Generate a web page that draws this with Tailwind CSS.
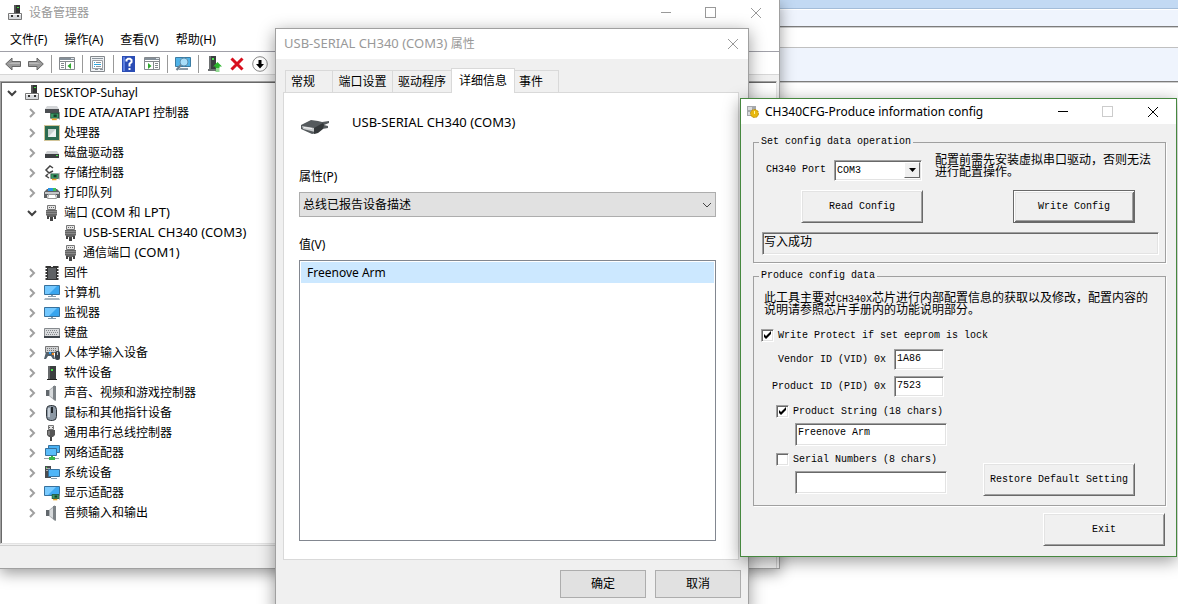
<!DOCTYPE html>
<html lang="zh-CN">
<head>
<meta charset="utf-8">
<title>设备管理器</title>
<script src="https://cdn.jsdelivr.net/npm/@tailwindcss/browser@4"></script>
</head>
<body class="relative h-screen overflow-hidden bg-white font-['Noto_Sans','Noto_Sans_CJK_SC',sans-serif] text-xs text-black">

<!-- Icon library -->
<svg class="hidden" aria-hidden="true">
  <symbol id="pc" viewBox="0 0 16 16"><path fill="#333" d="M7 0h6v9H7z"/><path fill="#555" d="M7 0h2v9H7z"/><path fill="#4d4" d="M10 2h2v1h-2z"/><path fill="#d8dadd" stroke="#777" d="M1.500 8.500h13v6h-13z"/><path fill="#333" d="M4 10h2v2H4zM10 10h2v2h-2z"/><path fill="#fff" d="M2 9h12v1H2z"/></symbol>
  <symbol id="card" viewBox="0 0 16 16"><path fill="#1d4c36" d="M4 6h11v7H4z"/><path fill="#3c9b66" d="M5 7h9v5H5z"/><path fill="#173d2c" d="M8 8h4v3H8z"/><path fill="#e9a11d" d="M6 13h6v2H6z"/><path fill="#888" d="M15 5h1v9h-1z"/></symbol>
  <symbol id="ide" viewBox="0 0 16 16"><path fill="#d4d6d8" d="M3 1h10l2 3H1z"/><path fill="#4c4f52" d="M1 4h14v4H1z"/><use href="#card" x="3" y="3" width="13" height="13"/></symbol>
  <symbol id="cpu" viewBox="0 0 16 16"><path fill="none" stroke="#a48b32" stroke-dasharray="1 1" d="M.5.500h15v15H.5z"/><path fill="#2c6b4f" d="M1 1h14v14H1z"/><path fill="#c9d2d0" d="M4 4h8v8H4z"/><path fill="#eef1f0" d="M4 12 12 4v8z"/></symbol>
  <symbol id="disk" viewBox="0 0 16 16"><path fill="#d0d2d4" d="M3 6h10l2 3H1z"/><path fill="#3c3f42" d="M1 9h14v4H1z"/><path fill="#50e050" d="M12 10h2v1h-2z"/></symbol>
  <symbol id="store" viewBox="0 0 16 16"><path fill="none" stroke="#444" stroke-width="1.500" d="M9 3 6 1 2 5l3 3 4-2M4 9l-2 2 3 2"/><use href="#card" x="3" y="4" width="13" height="12"/></symbol>
  <symbol id="printer" viewBox="0 0 16 16"><path fill="#5d6063" d="M3 4h10l3 3v6h-3v-3H3v3H0V7z"/><path fill="#2793e6" d="M4 3h8v3H4z"/><path fill="#3fc05a" d="M9 3h3v3H9z"/><path fill="#c4c6c8" d="M1 7h14v2H1z"/><path fill="#fff" stroke="#999" d="M4.500 9.500h7l1 4h-9z"/></symbol>
  <symbol id="port" viewBox="0 0 16 16"><path fill="#e4e4e4" stroke="#777" d="M3.500.500h8v4h-8z"/><path fill="#666" d="M5 2h1v1H5zM7 2h1v1H7zM9 2h1v1H9zM2 5h11v5l-2 2H4l-2-2z"/><path fill="#888" d="M2 6h11v1H2zM2 8h11v1H2z"/><path fill="#444" d="M3 11h2v3H3zM10 11h2v3h-2zM6 12h3v4H6z"/></symbol>
  <symbol id="chip" viewBox="0 0 16 16"><path fill="none" stroke="#333" stroke-width="3" stroke-dasharray="2 1" d="M3 1v14M13 1v14"/><path fill="#333" d="M3 1h10v14H3z"/><path fill="#5e6164" d="M4 3h8v11H4z"/><path fill="#eee" d="M7 1h2v1H7z"/></symbol>
  <symbol id="screen" viewBox="0 0 16 16"><path fill="#38a5ef" stroke="#37719d" d="M.5 2.500h15v9H.5z"/><path fill="#73c8ff" d="M1 3h12L5 11H1z"/><path fill="#8199ab" d="M7 12h2v1H7zM4 13h8v1H4z"/></symbol>
  <symbol id="computer" viewBox="0 0 16 16"><use href="#screen" y="-2" width="16" height="16"/><path fill="#a8b5bf" d="M1 13h14l1 2H0z"/></symbol>
  <symbol id="keyboard" viewBox="0 0 16 16"><path fill="#d9dbdd" stroke="#85898d" d="M.5 3.500h15v8H.5z"/><path stroke="#85898d" stroke-dasharray="1 1" d="M2 5.500h12M3 7.500h11M2 9.500h12"/><path fill="#3f454b" d="M0 11h16v2H0z"/></symbol>
  <symbol id="hid" viewBox="0 0 16 16"><path fill="#d0d2d4" stroke="#777" d="M1.500 1.500h13v6h-13z"/><path stroke="#777" stroke-dasharray="1 1" d="M3 3.500h10M3 5.500h10"/><path fill="#53606b" d="M2 7h7l2 7H9L7 11H4l-2 3H0z"/><path fill="#2f9cf0" d="M5 7h2v2H5z"/><path fill="#f08c28" d="M8 8h2v2H8z"/><rect x="11" y="6" width="5" height="9" rx="2" fill="#3b444c"/><path fill="#bcc4ca" d="M13 7h1v3h-1z"/></symbol>
  <symbol id="tower" viewBox="0 0 16 16"><path fill="#3b3e40" d="M4 1h8v14H4z"/><path fill="#66696b" d="M4 1h2v14H4z"/><path fill="#4ce24c" d="M7 4h2v2H7z"/><path fill="#222" d="M3 14h10v1H3z"/></symbol>
  <symbol id="speaker" viewBox="0 0 16 16"><path fill="#62686d" d="M2 5h4v6H2z"/><path fill="#a9aeb2" d="M5 5l6-5v16l-6-5z"/><path fill="#7d8387" d="M9 1h3v15l-3-2z"/><path fill="#d7dadc" d="M6 5l3-2v10l-3-2z"/></symbol>
  <symbol id="mouse" viewBox="0 0 16 16"><rect x="2.500" y=".5" width="10" height="15" rx="4" fill="#8c98a4" stroke="#31373d"/><path fill="#c6ced6" d="M4 3h2v9H4z"/><path fill="#22272c" d="M7 2h2v6H7z"/></symbol>
  <symbol id="usb" viewBox="0 0 16 16"><path fill="#e3e3e3" stroke="#777" d="M4.500.500h5v4h-5z"/><path fill="#555" d="M5 2h1v1H5zM8 2h1v1H8zM3 5h8v5l-2 2H5l-2-2z"/><path fill="#808080" d="M4 6h2v4H4z"/><path fill="#444" d="M6 12h2v4H6z"/></symbol>
  <symbol id="net" viewBox="0 0 16 16"><path fill="#49b2f4" stroke="#37719d" d="M4.500.500h11v7h-11z"/><path fill="#5abcfa" stroke="#37719d" d="M1.500 3.500h11v7h-11z"/><path fill="#39b54a" d="M5 12h6v3H5z"/><path fill="#9aa3aa" d="M0 13h5v1H0zM11 13h4v1h-4z"/><path fill="#39b54a" d="M7 11h2v2H7z"/></symbol>
  <symbol id="system" viewBox="0 0 16 16"><path fill="#4a4d50" d="M1 1h6v12H1z"/><path fill="#a8abad" d="M2 3h4v1H2zM2 5h4v1H2z"/><path fill="#4bdc4b" d="M2 2h1v1H2z"/><path fill="#4fb6f8" stroke="#37719d" d="M4.500 4.500h11v7h-11z"/><path fill="#8199ab" d="M7 13h6v1H7z"/></symbol>
  <symbol id="display" viewBox="0 0 16 16"><path fill="#3ea9f2" stroke="#37719d" d="M.5 1.500h15v9H.5z"/><path fill="#7acbff" d="M1 2h11l-8 8H1z"/><use href="#card" x="5" y="5" width="11" height="11"/></symbol>
  <symbol id="right" viewBox="0 0 16 16"><path fill="none" stroke="#a0a0a0" stroke-width="2" d="M6 4l4 4-4 4"/></symbol>
  <symbol id="down" viewBox="0 0 16 16"><path fill="none" stroke="#404040" stroke-width="2" d="M4 6l4 4 4-4"/></symbol>
  <symbol id="close" viewBox="0 0 12 12"><path fill="none" stroke="currentColor" d="M1 1l10 10M11 1 1 11"/></symbol>
  <symbol id="arrow" viewBox="0 0 16 16"><path fill="#999" stroke="#666" d="M.7 8 7 2v3.500h8.500v5H7V14z"/><path fill="#bbb" d="M7 6.500h8v1.500H3z"/></symbol>
  <symbol id="pane" viewBox="0 0 16 16"><path fill="#fff" stroke="#85898d" d="M.5 1.500h15v12H.5z"/><path fill="#85909a" d="M1 2h14v2H1z"/><path fill="#dfe5ea" d="M12 2h3v1h-3z"/><path stroke="#85898d" d="M1 5.500h14"/></symbol>
  <symbol id="tick" viewBox="0 0 13 13"><path d="M3 5v3l2 2 5-5V2L5 7z"/></symbol>
</svg>

<!-- Window behind everything -->
<div aria-hidden="true">
  <div class="h-[9px] border-b border-[#a3bcd8] bg-[#c2d9f3]"></div>
  <div class="h-[18px] border-t border-b border-t-white border-b-[#7c7c7c] bg-[#eff4fd]"></div>
  <div class="h-[21px] border-t border-b border-t-[#cfcfcf] border-b-[#c0c0c0] bg-white"></div>
  <div class="h-[34px] border-b border-[#7c7c7c] bg-[#eff4fd]"></div>
  <div class="border-t border-[#cfcfcf]"></div>
</div>

<!-- Device manager -->
<main class="absolute top-0 left-0 w-[780px] border-r border-b border-[#a0a0a0] bg-[#f0f0f0] shadow-[0_4px_14px_rgba(0,0,0,0.4)]">
  <header class="flex h-[25px] items-center bg-white pl-[7px] text-[#999]">
    <svg class="size-4"><use href="#pc"/></svg>
    <h1 class="ml-1.5 flex-1">设备管理器</h1>
    <button aria-label="最小化" class="flex h-full w-[45px] items-center justify-center"><span class="w-2.5 border-t border-current"></span></button>
    <button aria-label="最大化" class="flex h-full w-[45px] items-center justify-center"><span class="size-[11px] border border-current"></span></button>
    <button aria-label="关闭" class="flex h-full w-[46px] items-center justify-center"><svg class="size-3"><use href="#close"/></svg></button>
  </header>
  <nav class="flex h-[27px] items-center gap-[17px] border-b border-[#a0a0a8] bg-white pt-1 pl-2.5">
    <button>文件(F)</button><button>操作(A)</button><button>查看(V)</button><button>帮助(H)</button>
  </nav>
  <div class="flex h-[23px] items-center gap-[7px] border-b border-[#d7d7d7] bg-white pt-0.5 pl-[5px]">
    <button aria-label="后退"><svg class="size-4"><use href="#arrow"/></svg></button>
    <button aria-label="前进"><svg class="size-4 -scale-x-100"><use href="#arrow"/></svg></button>
    <span class="h-[18px] w-px bg-[#999]"></span>
    <button aria-label="显示控制台树"><svg class="size-4" viewBox="0 0 16 16"><use href="#pane"/><path stroke="#85898d" d="M6.500 6v8M2 7.500h3M2 9.500h3M2 11.500h3"/><path fill="#2fa82f" d="M12 7v6L8.500 10z"/></svg></button>
    <span class="h-[18px] w-px bg-[#999]"></span>
    <button aria-label="属性"><svg class="size-4" viewBox="0 0 16 16"><path fill="#eef1f4" stroke="#85898d" d="M.5.500h14v15H.5z"/><path fill="#fff" stroke="#9aa0a6" d="M2.500 4.500h10v8h-10z"/><path stroke="#8b949c" d="M2 2.500h11M6 6.500h5M6 10.500h5M5 13.500h3M10 13.500h3"/><path stroke="#2da7e0" d="M4 6.500h1M4 8.500h7M4 10.500h1"/></svg></button>
    <span class="h-[18px] w-px bg-[#999]"></span>
    <button aria-label="帮助"><svg class="size-4" viewBox="0 0 16 16"><path fill="#2b4db5" d="M1 0h13v16H1z"/><path fill="#5c7fe0" d="M2 1h2v14H2z"/><path fill="none" stroke="#fff" stroke-width="2" d="M5.500 5.500V4l1.500-1.300h2L10.500 4v2L8.500 8v2.500M8.500 12v2"/></svg></button>
    <button aria-label="显示操作窗格"><svg class="size-4" viewBox="0 0 16 16"><use href="#pane"/><path stroke="#85898d" d="M9.500 6v8M11 7.500h3M11 9.500h3M11 11.500h3"/><path fill="#2fa82f" d="M4 7v6l3.500-3z"/></svg></button>
    <span class="h-[18px] w-px bg-[#999]"></span>
    <button aria-label="扫描检测硬件改动"><svg class="size-4" viewBox="0 0 16 16"><path fill="#4fb3e8" stroke="#3b7ca3" d="M.5 1.500h15v9H.5z"/><path fill="#8b9aa6" d="M5 12h8v2H3z"/><circle cx="9" cy="6" r="4" fill="#a9def8" stroke="#5f8fae"/><path stroke="#6c7f8e" stroke-width="2" d="M6 9l-4.500 5"/></svg></button>
    <span class="h-[18px] w-px bg-[#999]"></span>
    <button aria-label="更新驱动程序"><svg class="size-4" viewBox="0 0 16 16"><path fill="#3b3e40" d="M3 0h7v13H3z"/><path fill="#6c6f71" d="M3 0h2v13H3zM2 13h8v2H2z"/><path fill="#4ce24c" d="M6 2h2v2H6z"/><path fill="#2cb52c" d="M11.500 6 16 10.500h-2.500V12h-4v-1.500H7zM9.500 12.500h4v1h-4zM9.500 14.500h4v1h-4z"/></svg></button>
    <button aria-label="卸载"><svg class="size-4" viewBox="0 0 16 16"><path stroke="#d8101e" stroke-width="3" d="M2.500 2.500l11 11M13.500 2.500l-11 11"/></svg></button>
    <button aria-label="禁用"><svg class="size-4" viewBox="0 0 16 16"><circle cx="8" cy="8" r="7.300" fill="#fff" stroke="#888"/><path d="M6.500 4h3v4H12l-4 4.500L4 8h2.500z"/></svg></button>
  </div>
  <div class="mt-1.5 mr-0.5 border-t border-r border-b border-l border-t-[#a0a0a0] border-r-[#e3e3e3] border-b-[#e3e3e3] border-l-[#a0a0a0]">
    <ul class="border-t border-l border-[#696969] bg-white pb-5">
      <li class="flex h-5 items-center gap-1 pl-0.5"><svg class="size-4"><use href="#down"/></svg><svg class="size-4"><use href="#pc"/></svg>DESKTOP-Suhayl</li>
      <li class="flex h-5 items-center gap-1 pl-[22px]"><svg class="size-4"><use href="#right"/></svg><svg class="size-4"><use href="#ide"/></svg><span><span class="text-[13px]">IDE ATA/ATAPI </span>控制器</span></li>
      <li class="flex h-5 items-center gap-1 pl-[22px]"><svg class="size-4"><use href="#right"/></svg><svg class="size-4"><use href="#cpu"/></svg>处理器</li>
      <li class="flex h-5 items-center gap-1 pl-[22px]"><svg class="size-4"><use href="#right"/></svg><svg class="size-4"><use href="#disk"/></svg>磁盘驱动器</li>
      <li class="flex h-5 items-center gap-1 pl-[22px]"><svg class="size-4"><use href="#right"/></svg><svg class="size-4"><use href="#store"/></svg>存储控制器</li>
      <li class="flex h-5 items-center gap-1 pl-[22px]"><svg class="size-4"><use href="#right"/></svg><svg class="size-4"><use href="#printer"/></svg>打印队列</li>
      <li class="flex h-5 items-center gap-1 pl-[22px]"><svg class="size-4"><use href="#down"/></svg><svg class="size-4"><use href="#port"/></svg><span>端口<span class="text-[13px]"> (COM </span>和<span class="text-[13px]"> LPT)</span></span></li>
      <li class="flex h-5 items-center gap-1 pl-[61px]"><svg class="size-4"><use href="#port"/></svg><span class="text-[13px]">USB-SERIAL CH340 (COM3)</span></li>
      <li class="flex h-5 items-center gap-1 pl-[61px]"><svg class="size-4"><use href="#port"/></svg><span>通信端口<span class="text-[13px]"> (COM1)</span></span></li>
      <li class="flex h-5 items-center gap-1 pl-[22px]"><svg class="size-4"><use href="#right"/></svg><svg class="size-4"><use href="#chip"/></svg>固件</li>
      <li class="flex h-5 items-center gap-1 pl-[22px]"><svg class="size-4"><use href="#right"/></svg><svg class="size-4"><use href="#computer"/></svg>计算机</li>
      <li class="flex h-5 items-center gap-1 pl-[22px]"><svg class="size-4"><use href="#right"/></svg><svg class="size-4"><use href="#screen"/></svg>监视器</li>
      <li class="flex h-5 items-center gap-1 pl-[22px]"><svg class="size-4"><use href="#right"/></svg><svg class="size-4"><use href="#keyboard"/></svg>键盘</li>
      <li class="flex h-5 items-center gap-1 pl-[22px]"><svg class="size-4"><use href="#right"/></svg><svg class="size-4"><use href="#hid"/></svg>人体学输入设备</li>
      <li class="flex h-5 items-center gap-1 pl-[22px]"><svg class="size-4"><use href="#right"/></svg><svg class="size-4"><use href="#tower"/></svg>软件设备</li>
      <li class="flex h-5 items-center gap-1 pl-[22px]"><svg class="size-4"><use href="#right"/></svg><svg class="size-4"><use href="#speaker"/></svg>声音、视频和游戏控制器</li>
      <li class="flex h-5 items-center gap-1 pl-[22px]"><svg class="size-4"><use href="#right"/></svg><svg class="size-4"><use href="#mouse"/></svg>鼠标和其他指针设备</li>
      <li class="flex h-5 items-center gap-1 pl-[22px]"><svg class="size-4"><use href="#right"/></svg><svg class="size-4"><use href="#usb"/></svg>通用串行总线控制器</li>
      <li class="flex h-5 items-center gap-1 pl-[22px]"><svg class="size-4"><use href="#right"/></svg><svg class="size-4"><use href="#net"/></svg>网络适配器</li>
      <li class="flex h-5 items-center gap-1 pl-[22px]"><svg class="size-4"><use href="#right"/></svg><svg class="size-4"><use href="#system"/></svg>系统设备</li>
      <li class="flex h-5 items-center gap-1 pl-[22px]"><svg class="size-4"><use href="#right"/></svg><svg class="size-4"><use href="#display"/></svg>显示适配器</li>
      <li class="flex h-5 items-center gap-1 pl-[22px]"><svg class="size-4"><use href="#right"/></svg><svg class="size-4"><use href="#speaker"/></svg>音频输入和输出</li>
    </ul>
  </div>
  <footer class="mt-px mr-0.5 h-[23px] border-t border-r border-[#d0d0d0]"></footer>
</main>

<!-- Port properties dialog -->
<section class="absolute top-7 left-[275px] w-[474px] border border-[#a0a0a0] bg-[#f0f0f0] pb-4 shadow-[0_4px_16px_rgba(0,0,0,0.4)]">
  <header class="flex h-[30px] items-center bg-white pl-2 text-[#999]">
    <h2 class="flex-1"><span class="text-[13px]">USB-SERIAL CH340 (COM3) </span>属性</h2>
    <button aria-label="关闭" class="flex h-full w-[30px] items-center justify-center"><svg class="size-3"><use href="#close"/></svg></button>
  </header>
  <div class="mt-[9px] flex items-end pl-[9px]" role="tablist">
    <button role="tab" class="h-[22px] w-12 border border-b-0 border-[#d9d9d9] pl-[5px] text-left">常规</button>
    <button role="tab" class="h-[22px] w-[60px] border-t border-r border-[#d9d9d9]">端口设置</button>
    <button role="tab" class="h-[22px] w-[58px] border-t border-[#d9d9d9]">驱动程序</button>
    <button role="tab" aria-selected="true" class="z-10 -mb-px h-[25px] w-16 border border-b-0 border-[#d9d9d9] bg-white">详细信息</button>
    <button role="tab" class="h-[22px] w-11 border-t border-r border-[#d9d9d9] pl-1 text-left">事件</button>
  </div>
  <div class="mr-[9px] ml-[7px] border border-[#d9d9d9] bg-white pt-[19px] pr-[22px] pb-[18px] pl-[15px]">
    <div class="flex h-6 items-start gap-[23px]">
      <svg class="mt-[7px] ml-0.5 h-4 w-7" viewBox="0 0 28 16"><path fill="#555a5d" d="M0 6 10 1l7 1 4 1 7-1v2l-5 2 4 1v2l-6 1-5 4-5 1L0 10z"/><path fill="#c8cbcd" d="M1 7l12 2 1 4-12-3z"/><path fill="#34383a" d="M13 9l9-5 1 2-1 4-5 4-4 1z"/><path fill="#f2f2f2" d="M3 8l8 1v1L3 9z"/></svg>
      <p class="text-[13px] leading-5">USB-SERIAL CH340 (COM3)</p>
    </div>
    <label for="prop" class="mt-[33px] block leading-4">属性(P)</label>
    <div class="relative mt-[7px]">
      <select id="prop" class="block h-[25px] w-full appearance-none border border-[#adadad] bg-[#e1e1e1] pl-[3px]"><option>总线已报告设备描述</option></select>
      <svg class="pointer-events-none absolute top-2 right-1 h-2.5 w-2.5" viewBox="0 0 10 10"><path fill="none" stroke="#444" d="M1 3l4 4 4-4"/></svg>
    </div>
    <label id="value-label" class="mt-5 block leading-4">值(V)</label>
    <ul aria-labelledby="value-label" class="mt-[7px] h-[281px] border border-[#828790] bg-white p-px">
      <li class="h-[21px] bg-[#cce8ff] pl-1.5 leading-[21px]">Freenove Arm</li>
    </ul>
  </div>
  <div class="mt-2.5 flex justify-end gap-[9px] pr-[7px]">
    <button class="h-7 w-[86px] border border-[#adadad] bg-[#e1e1e1]">确定</button>
    <button class="h-7 w-[86px] border border-[#adadad] bg-[#e1e1e1]">取消</button>
  </div>
</section>

<!-- CH340 configuration tool -->
<section class="absolute top-[98px] left-[740px] w-[437px] border border-[#46883f] bg-[#f0f0f0] pb-2.5 shadow-[0_4px_16px_rgba(0,0,0,0.4)]">
  <header class="flex h-[25px] items-center bg-white pl-[5px]">
    <svg class="size-3.5" viewBox="0 0 14 14"><path fill="#a5a8ab" d="M1 1h9v10H1z"/><path fill="#d8dadc" d="M2 2h4v3H2zM2 7h3v3H2z"/><circle cx="8.500" cy="8.500" r="4" fill="#e8b80e" stroke="#b88a10" stroke-dasharray="2 1"/><path fill="#fff3a0" d="M8 6h1v3H8z"/></svg>
    <h2 class="ml-[5px] flex-1">CH340CFG-Produce information config</h2>
    <button aria-label="Minimize" class="flex h-full w-[45px] items-center justify-center"><span class="w-2.5 border-t border-black"></span></button>
    <button aria-label="Maximize" disabled class="flex h-full w-[45px] items-center justify-center"><span class="size-[11px] border border-[#ccc]"></span></button>
    <button aria-label="Close" class="flex h-full w-[46px] items-center justify-center"><svg class="size-3"><use href="#close"/></svg></button>
  </header>
  <form class="pr-2.5 pl-3 font-['Liberation_Mono','Noto_Sans_CJK_SC',monospace] text-[10px] leading-3">
    <fieldset class="mt-3 min-w-0 border border-[#a0a0a0] pb-[7px] shadow-[1px_1px_#fff]">
      <legend class="ml-[5px] px-0.5">Set config data operation</legend>
      <div class="flex items-start pt-1.5 pl-3">
        <label for="port-select" class="mt-2.5 whitespace-nowrap">CH340 Port</label>
        <div class="relative mt-1.5 ml-2 w-[88px]">
          <select id="port-select" class="block h-[21px] w-full appearance-none border border-t-[#a0a0a0] border-r-white border-b-white border-l-[#a0a0a0] bg-white pl-0.5 shadow-[inset_1px_1px_#696969,inset_-1px_-1px_#e3e3e3]"><option>COM3</option></select>
          <span class="pointer-events-none absolute top-0.5 right-0.5 flex h-4 w-4 items-center justify-center border border-t-white border-r-[#696969] border-b-[#696969] border-l-white bg-[#f0f0f0]"><svg class="h-1 w-[7px]" viewBox="0 0 7 4"><path d="M0 0h7L3.500 4z"/></svg></span>
        </div>
        <p class="ml-[13px] w-[218px] pt-px text-xs leading-3">配置前需先安装虚拟串口驱动，否则无法进行配置操作。</p>
      </div>
      <div class="mt-[9px] flex justify-between pr-[30px] pl-[47px]">
        <button type="button" class="h-[33px] w-[122px] border border-t-white border-r-[#696969] border-b-[#696969] border-l-white bg-[#f0f0f0] shadow-[inset_1px_1px_#e3e3e3,inset_-1px_-1px_#a0a0a0]">Read Config</button>
        <button type="button" class="h-[33px] w-[122px] border border-[#696969] bg-[#f0f0f0] shadow-[inset_1px_1px_#fff,inset_-1px_-1px_#696969,inset_2px_2px_#e3e3e3,inset_-2px_-2px_#a0a0a0]">Write Config</button>
      </div>
      <output class="mt-[9px] mr-[6px] ml-2 block h-[23px] border border-t-[#a0a0a0] border-r-white border-b-white border-l-[#a0a0a0] pt-1 pl-px text-xs leading-3 shadow-[inset_1px_1px_#696969,inset_-1px_-1px_#e3e3e3]">写入成功</output>
    </fieldset>

    <fieldset class="mt-[7px] min-w-0 border border-[#a0a0a0] pb-[9px] shadow-[1px_1px_#fff]">
      <legend class="ml-[5px] px-0.5">Produce config data</legend>
      <p class="w-[402px] pt-[11px] pl-2.5 text-xs leading-3">此工具主要对<span class="text-[10px] leading-none">CH340X</span>芯片进行内部配置信息的获取以及修改，配置内容的<br>说明请参照芯片手册内的功能说明部分。</p>
      <label class="mt-3 flex items-center gap-1 pl-[7px]">
        <span class="grid"><input type="checkbox" checked class="col-start-1 row-start-1 size-[13px] appearance-none border border-t-[#a0a0a0] border-r-white border-b-white border-l-[#a0a0a0] bg-white shadow-[inset_1px_1px_#696969,inset_-1px_-1px_#e3e3e3]"><svg class="pointer-events-none col-start-1 row-start-1 size-[13px]"><use href="#tick"/></svg></span>
        Write Protect if set eeprom is lock
      </label>
      <div class="mt-[7px] grid grid-cols-[132px_50px] items-center gap-x-2 gap-y-[6px]">
        <label for="vid" class="text-right whitespace-nowrap">Vendor ID (VID) 0x</label>
        <input id="vid" value="1A86" class="h-[21px] w-full border border-t-[#a0a0a0] border-r-white border-b-white border-l-[#a0a0a0] bg-white pb-0.5 pl-0.5 shadow-[inset_1px_1px_#696969,inset_-1px_-1px_#e3e3e3]">
        <label for="pid" class="text-right whitespace-nowrap">Product ID (PID) 0x</label>
        <input id="pid" value="7523" class="h-[21px] w-full border border-t-[#a0a0a0] border-r-white border-b-white border-l-[#a0a0a0] bg-white pb-0.5 pl-0.5 shadow-[inset_1px_1px_#696969,inset_-1px_-1px_#e3e3e3]">
      </div>
      <div class="mt-2 flex items-end justify-between pr-[30px] pl-[22px]">
        <div class="pb-0.5">
          <label class="flex items-center gap-1">
            <span class="grid"><input type="checkbox" checked class="col-start-1 row-start-1 size-[13px] appearance-none border border-t-[#a0a0a0] border-r-white border-b-white border-l-[#a0a0a0] bg-white shadow-[inset_1px_1px_#696969,inset_-1px_-1px_#e3e3e3]"><svg class="pointer-events-none col-start-1 row-start-1 size-[13px]"><use href="#tick"/></svg></span>
            Product String (18 chars)
          </label>
          <input aria-label="Product String" value="Freenove Arm" class="mt-[5px] ml-[19px] block h-[23px] w-[152px] border border-t-[#a0a0a0] border-r-white border-b-white border-l-[#a0a0a0] bg-white pb-1 pl-0.5 shadow-[inset_1px_1px_#696969,inset_-1px_-1px_#e3e3e3]">
          <label class="mt-[7px] flex items-center gap-1">
            <span class="grid"><input type="checkbox" class="size-[13px] appearance-none border border-t-[#a0a0a0] border-r-white border-b-white border-l-[#a0a0a0] bg-white shadow-[inset_1px_1px_#696969,inset_-1px_-1px_#e3e3e3]"></span>
            Serial Numbers (8 chars)
          </label>
          <input aria-label="Serial Numbers" class="mt-[5px] ml-[19px] block h-[23px] w-[152px] border border-t-[#a0a0a0] border-r-white border-b-white border-l-[#a0a0a0] bg-white pb-1 pl-0.5 shadow-[inset_1px_1px_#696969,inset_-1px_-1px_#e3e3e3]">
        </div>
        <button type="button" class="h-[33px] w-[152px] border border-t-white border-r-[#696969] border-b-[#696969] border-l-white bg-[#f0f0f0] whitespace-nowrap shadow-[inset_1px_1px_#e3e3e3,inset_-1px_-1px_#a0a0a0]">Restore Default Setting</button>
      </div>
    </fieldset>
    <div class="mt-[7px] flex justify-end pr-px"><button type="button" class="h-[33px] w-[122px] border border-t-white border-r-[#696969] border-b-[#696969] border-l-white bg-[#f0f0f0] shadow-[inset_1px_1px_#e3e3e3,inset_-1px_-1px_#a0a0a0]">Exit</button></div>
  </form>
</section>
</body>
</html>
